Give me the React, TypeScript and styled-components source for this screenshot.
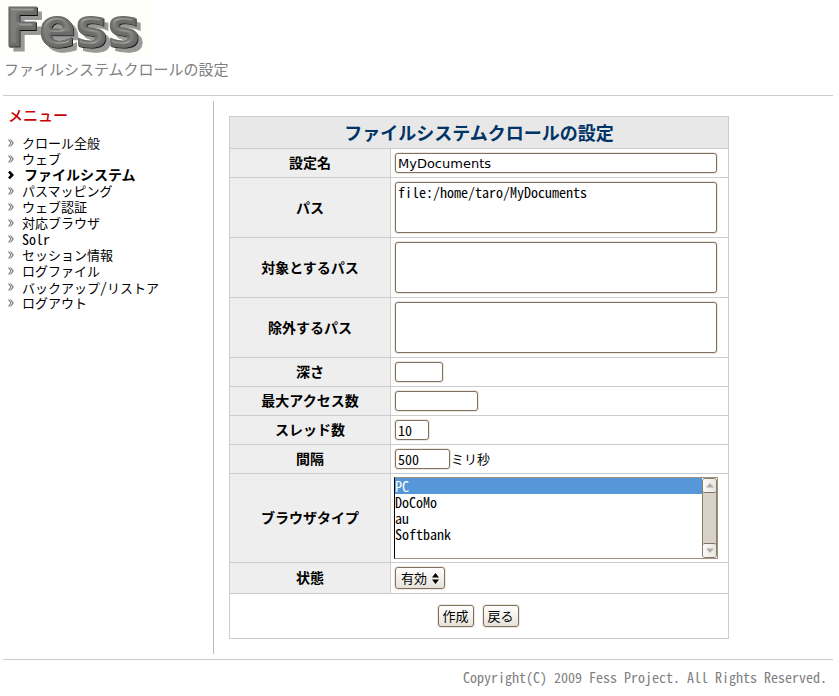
import React from "react";
import styled, { createGlobalStyle } from "styled-components";

const mono = `"Noto Sans CJK JP", sans-serif`;

const GlobalStyle = createGlobalStyle`
  * { box-sizing: border-box; }
  body { margin: 0; background: #fff; color: #000; font: 13px/16px ${mono}; }
  input, select, textarea, button { font: inherit; color: inherit; margin: 0; }
`;

const halfWidth = `
  font-size: 14px;
  font-feature-settings: "hwid", "liga" 0;
`;
const Latin = styled.span`
  ${halfWidth}
  line-height: 16px;
`;
const Page = styled.div`
  padding: 0 6px 0 3px;
`;
const Header = styled.header`
  height: 96px;
  border-bottom: 1px solid #ccc;
`;
const Logo = styled.svg`
  display: block;
  background: #fefefa;
`;
const Subtitle = styled.p`
  margin: 0;
  padding-left: 1px;
  font-size: 15px;
  line-height: 20px;
  color: #808080;
`;
const Columns = styled.div`
  display: flex;
  margin: 5px 0;
`;
const Sidebar = styled.nav`
  flex: 0 0 211px;
  padding-left: 5px;
  border-right: 1px solid #bbb;
`;
const MenuTitle = styled.h2`
  margin: 3px 0 9px;
  font-size: 15px;
  line-height: 22px;
  font-weight: 500;
  color: #c00;
`;
const MenuList = styled.ul`
  margin: 0;
  padding: 0;
  list-style: none;
`;
const MenuItem = styled.li<{ $active?: boolean }>`
  display: flex;
  align-items: center;
  height: 16px;
  gap: ${(p) => (p.$active ? 10 : 8)}px;
  color: ${(p) => (p.$active ? "#000" : "#777")};
  font-size: ${(p) => (p.$active ? 14 : 13)}px;
  line-height: ${(p) => (p.$active ? 14 : 16)}px;
  font-weight: ${(p) => (p.$active ? 700 : 400)};
`;
const MenuLink = styled.a`
  height: 16px;
  color: #000;
  text-decoration: none;
  white-space: nowrap;
`;
const Main = styled.main`
  flex: 1;
  padding: 15px;
`;
const Table = styled.table`
  width: 100%;
  max-width: 500px;
  border-collapse: collapse;
  table-layout: fixed;
  th, td { border: 1px solid #ccc; }
`;
const TitleCell = styled.th`
  height: 32px;
  padding: 0 0 2px;
  background: #e8e8e8;
  color: #036;
  font-size: 18px;
  line-height: 26px;
`;
const LabelCell = styled.th`
  padding: 0 0 2px;
  background: #eee;
  font-size: 14px;
  line-height: 20px;
`;
const FieldCell = styled.td`
  padding: 3px;
`;
const ActionCell = styled.td`
  height: 45px;
  padding: 0 2px 0 0;
`;
const Line = styled.div`
  display: flex;
  align-items: center;
`;
const frame = `
  display: block;
  margin: 1px;
  border: 1px solid #7f7060;
  border-radius: 3px;
  box-shadow: 0 0 0 1px #ece8e0;
  background: #fff;
  outline: none;
`;
const TextInput = styled.input<{ $width: number; $sans?: boolean }>`
  && {
    ${frame}
    ${halfWidth}
    ${(p) => (p.$sans ? `font: 13px "DejaVu Sans", sans-serif; font-feature-settings: normal;` : "")}
    width: ${(p) => p.$width}px;
    max-width: 100%;
    height: 20px;
    padding: 0 2px;
  }
`;
const TextArea = styled.textarea`
  && {
    ${frame}
    ${halfWidth}
    width: 322px;
    max-width: 100%;
    height: 51px;
    padding: 1px 2px;
    resize: none;
    overflow: hidden;
  }
`;
const ListFrame = styled.div`
  display: flex;
  width: 324px;
  max-width: 100%;
  height: 82px;
  border: 1px solid #a09080;
  border-left-color: #000;
`;
const ListBox = styled.select`
  && {
    ${halfWidth}
    flex: 1;
    min-width: 0;
    height: 80px;
    padding: 0;
    border: 0;
    border-radius: 0;
    outline: none;
    overflow: hidden;
    background: #fff;
  }
  option {
    display: flex;
    align-items: center;
    height: 16px;
    min-height: 16px;
    padding: 0;
  }
  option:checked {
    background: #5597d8 linear-gradient(#5597d8, #5597d8);
    color: #fff;
  }
`;
const ScrollTrack = styled.div`
  display: flex;
  flex-direction: column;
  justify-content: space-between;
  width: 15px;
  border: 1px solid #8a7c6c;
  border-radius: 3px;
  background: #d9d2c6;
`;
const ScrollArrow = styled.span<{ $down?: boolean }>`
  display: grid;
  place-items: center;
  height: 14px;
  border-radius: 2px;
  background: linear-gradient(90deg, #fbfaf8, #e9e6e0);
  border-${(p) => (p.$down ? "top" : "bottom")}: 1px solid #7f7060;
  svg { transform: ${(p) => (p.$down ? "rotate(180deg)" : "none")}; }
`;
const control = `
  border: 1px solid #7f7060;
  border-radius: 3px;
  box-shadow: 0 0 0 1px #ece8e0;
  background: linear-gradient(#fff, #f3f1ed 50%, #e6e2da);
`;
const DropWrap = styled.div`
  display: grid;
  width: 50px;
  margin: 1px;
  align-items: center;
  > * { grid-area: 1 / 1; }
  svg { justify-self: end; margin-right: 6px; pointer-events: none; }
`;
const DropDown = styled.select`
  && {
    ${control}
    appearance: none;
    width: 50px;
    height: 22px;
    padding: 0 0 0 5px;
    line-height: 20px;
  }
`;
const Actions = styled.div`
  display: flex;
  justify-content: center;
  gap: 9px;
`;
const Button = styled.button`
  && {
    ${control}
    width: 36px;
    height: 22px;
    padding: 0;
    line-height: 20px;
  }
`;
const Footer = styled.footer`
  border-top: 1px solid #ccc;
  padding: 9px 6px 0 0;
  text-align: right;
  color: #808080;
  line-height: 18px;
`;

const menu = ["クロール全般", "ウェブ", "ファイルシステム", "パスマッピング", "ウェブ認証", "対応ブラウザ", "Solr", "セッション情報", "ログファイル", "バックアップ/リストア", "ログアウト"];
const active = "ファイルシステム";

const Chevron = ({ bold }: { bold: boolean }) => (
  <svg width="6" height="8" viewBox="0 0 6 8" fill="none" stroke="currentColor" aria-hidden="true">
    {bold ? (
      <path strokeWidth="2.6" d="M1 0.6 L4.2 4 L1 7.4" />
    ) : (
      <path strokeWidth="1.1" d="M0.5 0.5 L3 4 L0.5 7.5 M2.5 0.5 L5.2 4 L2.5 7.5" />
    )}
  </svg>
);

const FessLogo = () => (
  <Logo width="150" height="59" viewBox="0 0 150 59" role="img" aria-label="Fess">
    <defs>
      <filter id="bevel" filterUnits="userSpaceOnUse" x="0" y="0" width="150" height="59">
        <feGaussianBlur in="SourceAlpha" stdDeviation="1.4" result="soft" />
        <feSpecularLighting in="soft" surfaceScale="4" specularConstant="0.7" specularExponent="14" lightingColor="#ccc" result="light">
          <feDistantLight azimuth="250" elevation="40" />
        </feSpecularLighting>
        <feComposite in="light" in2="SourceAlpha" operator="in" result="shine" />
        <feComposite in="SourceGraphic" in2="shine" operator="arithmetic" k1="0" k2="1" k3="0.5" k4="0" result="face" />
        <feFlood floodColor="#0c0c0c" />
        <feComposite in2="SourceAlpha" operator="in" />
        <feOffset dx="1" dy="1" result="edge" />
        <feFlood floodColor="#999" />
        <feComposite in2="SourceAlpha" operator="in" />
        <feOffset dx="5" dy="5" />
        <feGaussianBlur stdDeviation="0.4" result="shadow" />
        <feMerge>
          <feMergeNode in="shadow" />
          <feMergeNode in="edge" />
          <feMergeNode in="face" />
        </feMerge>
      </filter>
    </defs>
    <text x="1" y="46" fill="#6c6c6a" stroke="#6c6c6a" strokeWidth="1" fontFamily="DejaVu Sans, sans-serif" fontWeight="700" fontSize="54" fontKerning="none" filter="url(#bevel)">Fess</text>
  </Logo>
);

const MixedText = ({ text }: { text: string }) => (
  <>{text.split(/([A-Za-z/]+)/).filter(Boolean).map((part, i) => (/[A-Za-z/]/.test(part) ? <Latin key={i}>{part}</Latin> : part))}</>
);

const Row = ({ id, label, children }: { id: string; label: string; children: React.ReactNode }) => (
  <tr>
    <LabelCell scope="row"><label htmlFor={id}>{label}</label></LabelCell>
    <FieldCell>{children}</FieldCell>
  </tr>
);

const LabelColumn = styled.col`
  width: 161px;
`;

const ScrollTriangle = () => (
  <svg width="8" height="5" viewBox="0 0 8 5" aria-hidden="true"><path d="M0 4.5 L4 0 L8 4.5Z" fill="#b2aca4" /></svg>
);

export default function App() {
  return (
    <Page>
      <GlobalStyle />
      <Header>
        <FessLogo />
        <Subtitle>ファイルシステムクロールの設定</Subtitle>
      </Header>
      <Columns>
        <Sidebar>
          <MenuTitle>メニュー</MenuTitle>
          <MenuList>
            {menu.map((m) => (
              <MenuItem key={m} $active={m === active}>
                <Chevron bold={m === active} />
                <MenuLink href="#"><MixedText text={m} /></MenuLink>
              </MenuItem>
            ))}
          </MenuList>
        </Sidebar>
        <Main>
          <form onSubmit={(e) => e.preventDefault()}>
            <Table>
              <colgroup><LabelColumn /><col /></colgroup>
              <thead>
                <tr><TitleCell colSpan={2}>ファイルシステムクロールの設定</TitleCell></tr>
              </thead>
              <tbody>
                <Row id="name" label="設定名"><TextInput id="name" $width={322} $sans defaultValue="MyDocuments" /></Row>
                <Row id="paths" label="パス"><TextArea id="paths" defaultValue="file:/home/taro/MyDocuments" /></Row>
                <Row id="included" label="対象とするパス"><TextArea id="included" /></Row>
                <Row id="excluded" label="除外するパス"><TextArea id="excluded" /></Row>
                <Row id="depth" label="深さ"><TextInput id="depth" $width={48} /></Row>
                <Row id="max" label="最大アクセス数"><TextInput id="max" $width={83} /></Row>
                <Row id="threads" label="スレッド数"><TextInput id="threads" $width={34} defaultValue="10" /></Row>
                <Row id="interval" label="間隔">
                  <Line><TextInput id="interval" $width={55} defaultValue="500" />ミリ秒</Line>
                </Row>
                <Row id="browser" label="ブラウザタイプ">
                  <ListFrame>
                    <ListBox id="browser" multiple size={5} defaultValue={["PC"]}>
                      <option>PC</option>
                      <option>DoCoMo</option>
                      <option>au</option>
                      <option>Softbank</option>
                    </ListBox>
                    <ScrollTrack aria-hidden="true">
                      <ScrollArrow><ScrollTriangle /></ScrollArrow>
                      <ScrollArrow $down><ScrollTriangle /></ScrollArrow>
                    </ScrollTrack>
                  </ListFrame>
                </Row>
                <Row id="status" label="状態">
                  <DropWrap>
                    <DropDown id="status"><option>有効</option><option>無効</option></DropDown>
                    <svg width="7" height="11" viewBox="0 0 7 11" aria-hidden="true">
                      <path d="M0 4.5 L3.5 0 L7 4.5Z M0 6.5 L3.5 11 L7 6.5Z" />
                    </svg>
                  </DropWrap>
                </Row>
                <tr>
                  <ActionCell colSpan={2}>
                    <Actions>
                      <Button type="submit">作成</Button>
                      <Button type="button">戻る</Button>
                    </Actions>
                  </ActionCell>
                </tr>
              </tbody>
            </Table>
          </form>
        </Main>
      </Columns>
      <Footer><Latin>Copyright(C) 2009 Fess Project. All Rights Reserved.</Latin></Footer>
    </Page>
  );
}
